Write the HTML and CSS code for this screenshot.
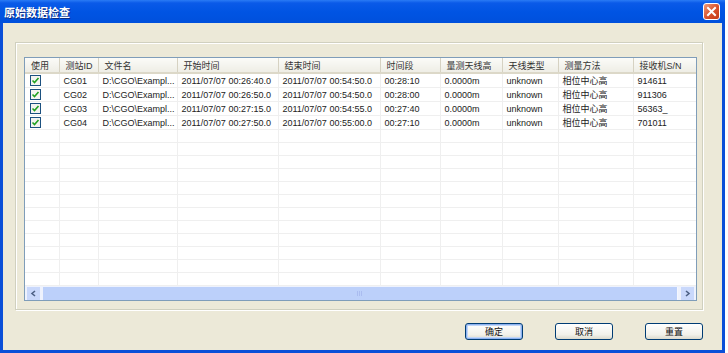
FILE: index.html
```html
<!DOCTYPE html>
<html lang="zh-CN">
<head>
  <meta charset="UTF-8">
  <title>原始数据检查</title>
  <link rel="stylesheet" href="styles.css">
</head>
<body>
  <div class="window">
    <div class="titlebar">
      <span class="title">原始数据检查</span>
      <button class="close">
        <svg width="11" height="11" viewBox="0 0 11 11"><path d="M2 2 L9 9 M9 2 L2 9" stroke="#fff" stroke-width="2" stroke-linecap="square"/></svg>
      </button>
    </div>
    <div class="content">
      <div class="group">
        <div class="list">
          <div class="list-view">
            <table class="grid">
              <colgroup>
                <col style="width:34px"><col style="width:39px"><col style="width:79px"><col style="width:101px"><col style="width:102px">
                <col style="width:60px"><col style="width:62px"><col style="width:56px"><col style="width:75px"><col style="width:70px">
              </colgroup>
              <thead>
                <tr><th>使用</th><th>测站ID</th><th>文件名</th><th>开始时间</th><th>结束时间</th><th>时间段</th><th>量测天线高</th><th>天线类型</th><th>测量方法</th><th>接收机S/N</th></tr>
              </thead>
              <tbody>
                <tr><td><span class="chk"></span></td><td>CG01</td><td>D:\CGO\Exampl...</td><td>2011/07/07 00:26:40.0</td><td>2011/07/07 00:54:50.0</td><td>00:28:10</td><td>0.0000m</td><td>unknown</td><td>相位中心高</td><td>914611</td></tr>
                <tr><td><span class="chk"></span></td><td>CG02</td><td>D:\CGO\Exampl...</td><td>2011/07/07 00:26:50.0</td><td>2011/07/07 00:54:50.0</td><td>00:28:00</td><td>0.0000m</td><td>unknown</td><td>相位中心高</td><td>911306</td></tr>
                <tr><td><span class="chk"></span></td><td>CG03</td><td>D:\CGO\Exampl...</td><td>2011/07/07 00:27:15.0</td><td>2011/07/07 00:54:55.0</td><td>00:27:40</td><td>0.0000m</td><td>unknown</td><td>相位中心高</td><td>56363_</td></tr>
                <tr><td><span class="chk"></span></td><td>CG04</td><td>D:\CGO\Exampl...</td><td>2011/07/07 00:27:50.0</td><td>2011/07/07 00:55:00.0</td><td>00:27:10</td><td>0.0000m</td><td>unknown</td><td>相位中心高</td><td>701011</td></tr>
                <tr><td></td><td></td><td></td><td></td><td></td><td></td><td></td><td></td><td></td><td></td></tr>
                <tr><td></td><td></td><td></td><td></td><td></td><td></td><td></td><td></td><td></td><td></td></tr>
                <tr><td></td><td></td><td></td><td></td><td></td><td></td><td></td><td></td><td></td><td></td></tr>
                <tr><td></td><td></td><td></td><td></td><td></td><td></td><td></td><td></td><td></td><td></td></tr>
                <tr><td></td><td></td><td></td><td></td><td></td><td></td><td></td><td></td><td></td><td></td></tr>
                <tr><td></td><td></td><td></td><td></td><td></td><td></td><td></td><td></td><td></td><td></td></tr>
                <tr><td></td><td></td><td></td><td></td><td></td><td></td><td></td><td></td><td></td><td></td></tr>
                <tr><td></td><td></td><td></td><td></td><td></td><td></td><td></td><td></td><td></td><td></td></tr>
                <tr><td></td><td></td><td></td><td></td><td></td><td></td><td></td><td></td><td></td><td></td></tr>
                <tr><td></td><td></td><td></td><td></td><td></td><td></td><td></td><td></td><td></td><td></td></tr>
                <tr><td></td><td></td><td></td><td></td><td></td><td></td><td></td><td></td><td></td><td></td></tr>
                <tr><td></td><td></td><td></td><td></td><td></td><td></td><td></td><td></td><td></td><td></td></tr>
                <tr><td></td><td></td><td></td><td></td><td></td><td></td><td></td><td></td><td></td><td></td></tr>
                <tr><td></td><td></td><td></td><td></td><td></td><td></td><td></td><td></td><td></td><td></td></tr>
              </tbody>
            </table>
          </div>
          <div class="hscroll">
            <span class="sb-btn">
              <svg width="7" height="7" viewBox="0 0 7 7"><path d="M5 1 L2 3.5 L5 6" fill="none" stroke="#4d6185" stroke-width="1.6"/></svg>
            </span>
            <span class="sb-thumb"><span class="grip"></span></span>
            <span class="sb-btn">
              <svg width="7" height="7" viewBox="0 0 7 7"><path d="M2 1 L5 3.5 L2 6" fill="none" stroke="#4d6185" stroke-width="1.6"/></svg>
            </span>
          </div>
        </div>
      </div>
      <div class="buttons">
        <button class="btn default">确定</button>
        <button class="btn">取消</button>
        <button class="btn">重置</button>
      </div>
    </div>
  </div>
</body>
</html>
```

FILE: styles.css
```css
body {
  margin: 0;
  background: #fff;
  font-family: "Liberation Sans", "Noto Sans CJK SC", sans-serif;
}
.window {
  width: 725px;
  height: 353px;
  display: flex;
  flex-direction: column;
  background: #ece9d8;
}
.titlebar {
  height: 23px;
  padding: 0 5px 0 4px;
  display: flex;
  align-items: center;
  justify-content: space-between;
  background: linear-gradient(#2a7bf5 0, #0a5ae8 3px, #0054e3 12px, #0050dc 23px);
}
.title {
  color: #fff;
  font-size: 11px;
  font-weight: bold;
  text-shadow: 1px 1px 0 #0a2a80;
}
.close {
  width: 17px;
  height: 17px;
  padding: 0;
  border: 1px solid #fff;
  border-radius: 3px;
  background: linear-gradient(135deg, #f09a78, #d8502a 55%, #c53a16);
  display: flex;
  align-items: center;
  justify-content: center;
}
.content {
  flex: 1;
  display: flex;
  flex-direction: column;
  padding: 19px 19px 0 12px;
  background: #ece9d8;
  border-left: 3px solid #0a4fd8;
  border-right: 3px solid #0a4fd8;
  border-bottom: 3px solid #0a4fd8;
}
.group {
  box-sizing: border-box;
  height: 268px;
  border: 1px solid #d0d0bf;
  box-shadow: inset 1px 1px 0 #fff, 1px 1px 0 #fff;
  padding: 14px 5px 8px 8px;
}
.list {
  height: 100%;
  box-sizing: border-box;
  border: 1px solid #7f9db9;
  background: #fff;
  display: flex;
  flex-direction: column;
}
.list-view {
  flex: 1;
  overflow: hidden;
}
.grid {
  border-collapse: collapse;
  table-layout: fixed;
  width: 678px;
  font-size: 9px;
  color: #222;
}
.grid th {
  height: 14px;
  padding: 0 0 0 6px;
  text-align: left;
  font-weight: normal;
  color: #333;
  white-space: nowrap;
  overflow: hidden;
  background: linear-gradient(#fbfbf8, #eeede5);
  border-right: 1px solid #d6d2c2;
  border-bottom: 2px solid #dcd8c8;
}
.grid td {
  height: 12px;
  padding: 0 0 0 4px;
  white-space: nowrap;
  overflow: hidden;
  border-right: 1px solid #efefef;
  border-bottom: 1px solid #efefef;
}
.chk {
  display: block;
  width: 9px;
  height: 9px;
  margin-left: 1px;
  border: 1px solid #1c5180;
  background: #f4f4f0 url("data:image/svg+xml,%3Csvg xmlns='http://www.w3.org/2000/svg' width='9' height='9'%3E%3Cpath d='M1.5 4.5 L3.5 6.5 L7.5 2' fill='none' stroke='%2321a121' stroke-width='1.6'/%3E%3C/svg%3E") no-repeat;
}
.hscroll {
  height: 13px;
  display: flex;
  background: #eef2fd;
  padding: 1px 2px 0 2px;
}
.sb-btn {
  width: 13px;
  display: flex;
  align-items: center;
  justify-content: center;
  background: #c9d8fb;
}
.sb-thumb {
  flex: 1;
  margin: 0 3px;
  background: #bcd0fa;
  border-right: 1px solid #f4f7ff;
  display: flex;
  align-items: center;
  justify-content: center;
}
.grip {
  width: 6px;
  height: 5px;
  background: repeating-linear-gradient(90deg, #aabcf0 0 1px, transparent 1px 2px);
}
.buttons {
  display: flex;
  justify-content: flex-end;
  gap: 32px;
  margin-top: 13px;
}
.btn {
  width: 58px;
  height: 17px;
  padding: 0;
  font-family: "Liberation Sans", "Noto Sans CJK SC", sans-serif;
  font-size: 9px;
  color: #111;
  border: 1px solid #003c74;
  border-radius: 3px;
  background: linear-gradient(#ffffff, #f2f1ea 70%, #dcdacd);
}
.btn.default {
  box-shadow: inset 0 0 0 1px #8db2f0, inset 0 0 0 2px #c0d6f8;
}
```
